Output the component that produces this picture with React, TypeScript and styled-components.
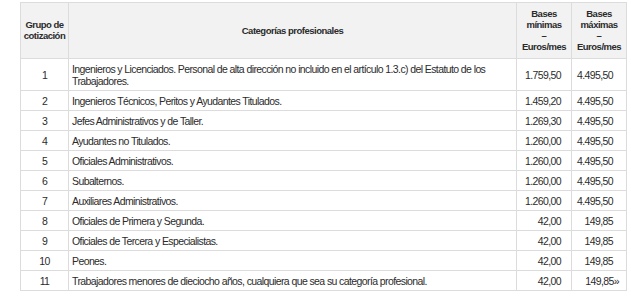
import React from "react";
import styled, { createGlobalStyle } from "styled-components";

const GlobalStyle = createGlobalStyle`
  html, body {
    margin: 0;
    padding: 0;
    background: #ffffff;
  }
  body {
    font-family: "Liberation Sans Narrow", "Arial Narrow", "Liberation Sans", Arial, sans-serif;
    color: #2b2b2b;
  }
`;

const Page = styled.div`
  padding: 2px 0 0 20px;
`;

const Table = styled.table`
  border-collapse: collapse;
  table-layout: fixed;
  width: 606px;
  font-size: 10.5px;
  letter-spacing: -0.6px;
`;

const Col = styled.col<{ w: number }>`
  width: ${(p) => p.w}px;
`;

const Th = styled.th`
  background: #f2f2f2;
  border: 1px solid #dcdcdc;
  font-size: 9.5px;
  font-weight: bold;
  letter-spacing: -0.5px;
  line-height: 11px;
  padding: 5px 2px 6px;
  text-align: center;
  vertical-align: middle;
  color: #2b2b2b;
`;

const Td = styled.td<{ align?: "left" | "center" | "right"; pr?: number }>`
  border: 1px solid #dcdcdc;
  line-height: 12px;
  padding: 4px ${(p) => p.pr ?? 3}px 3px 3px;
  text-align: ${(p) => p.align ?? "left"};
  vertical-align: middle;
  color: #2b2b2b;
`;

const Trail = styled.span`
  margin-right: -6px;
`;

type Row = { n: number; cat: string; min: string; max: string };

const rows: Row[] = [
  {
    n: 1,
    cat: "Ingenieros y Licenciados. Personal de alta dirección no incluido en el artículo 1.3.c) del Estatuto de los Trabajadores.",
    min: "1.759,50",
    max: "4.495,50",
  },
  { n: 2, cat: "Ingenieros Técnicos, Peritos y Ayudantes Titulados.", min: "1.459,20", max: "4.495,50" },
  { n: 3, cat: "Jefes Administrativos y de Taller.", min: "1.269,30", max: "4.495,50" },
  { n: 4, cat: "Ayudantes no Titulados.", min: "1.260,00", max: "4.495,50" },
  { n: 5, cat: "Oficiales Administrativos.", min: "1.260,00", max: "4.495,50" },
  { n: 6, cat: "Subalternos.", min: "1.260,00", max: "4.495,50" },
  { n: 7, cat: "Auxiliares Administrativos.", min: "1.260,00", max: "4.495,50" },
  { n: 8, cat: "Oficiales de Primera y Segunda.", min: "42,00", max: "149,85" },
  { n: 9, cat: "Oficiales de Tercera y Especialistas.", min: "42,00", max: "149,85" },
  { n: 10, cat: "Peones.", min: "42,00", max: "149,85" },
  {
    n: 11,
    cat: "Trabajadores menores de dieciocho años, cualquiera que sea su categoría profesional.",
    min: "42,00",
    max: "149,85",
  },
];

export default function App() {
  return (
    <>
      <GlobalStyle />
      <Page>
        <Table>
          <colgroup>
            <Col w={48} />
            <Col w={448} />
            <Col w={55} />
            <Col w={55} />
          </colgroup>
          <thead>
            <tr>
              <Th>
                Grupo de
                <br />
                cotización
              </Th>
              <Th>Categorías profesionales</Th>
              <Th>
                Bases
                <br />
                mínimas
                <br />–<br />
                Euros/mes
              </Th>
              <Th>
                Bases
                <br />
                máximas
                <br />–<br />
                Euros/mes
              </Th>
            </tr>
          </thead>
          <tbody>
            {rows.map((r, i) => (
              <tr key={r.n}>
                <Td align="center">{r.n}</Td>
                <Td>{r.cat}</Td>
                <Td align="right" pr={10}>
                  {r.min}
                </Td>
                <Td align="right" pr={13}>
                  {r.max}
                  {i === rows.length - 1 && <Trail>»</Trail>}
                </Td>
              </tr>
            ))}
          </tbody>
        </Table>
      </Page>
    </>
  );
}
